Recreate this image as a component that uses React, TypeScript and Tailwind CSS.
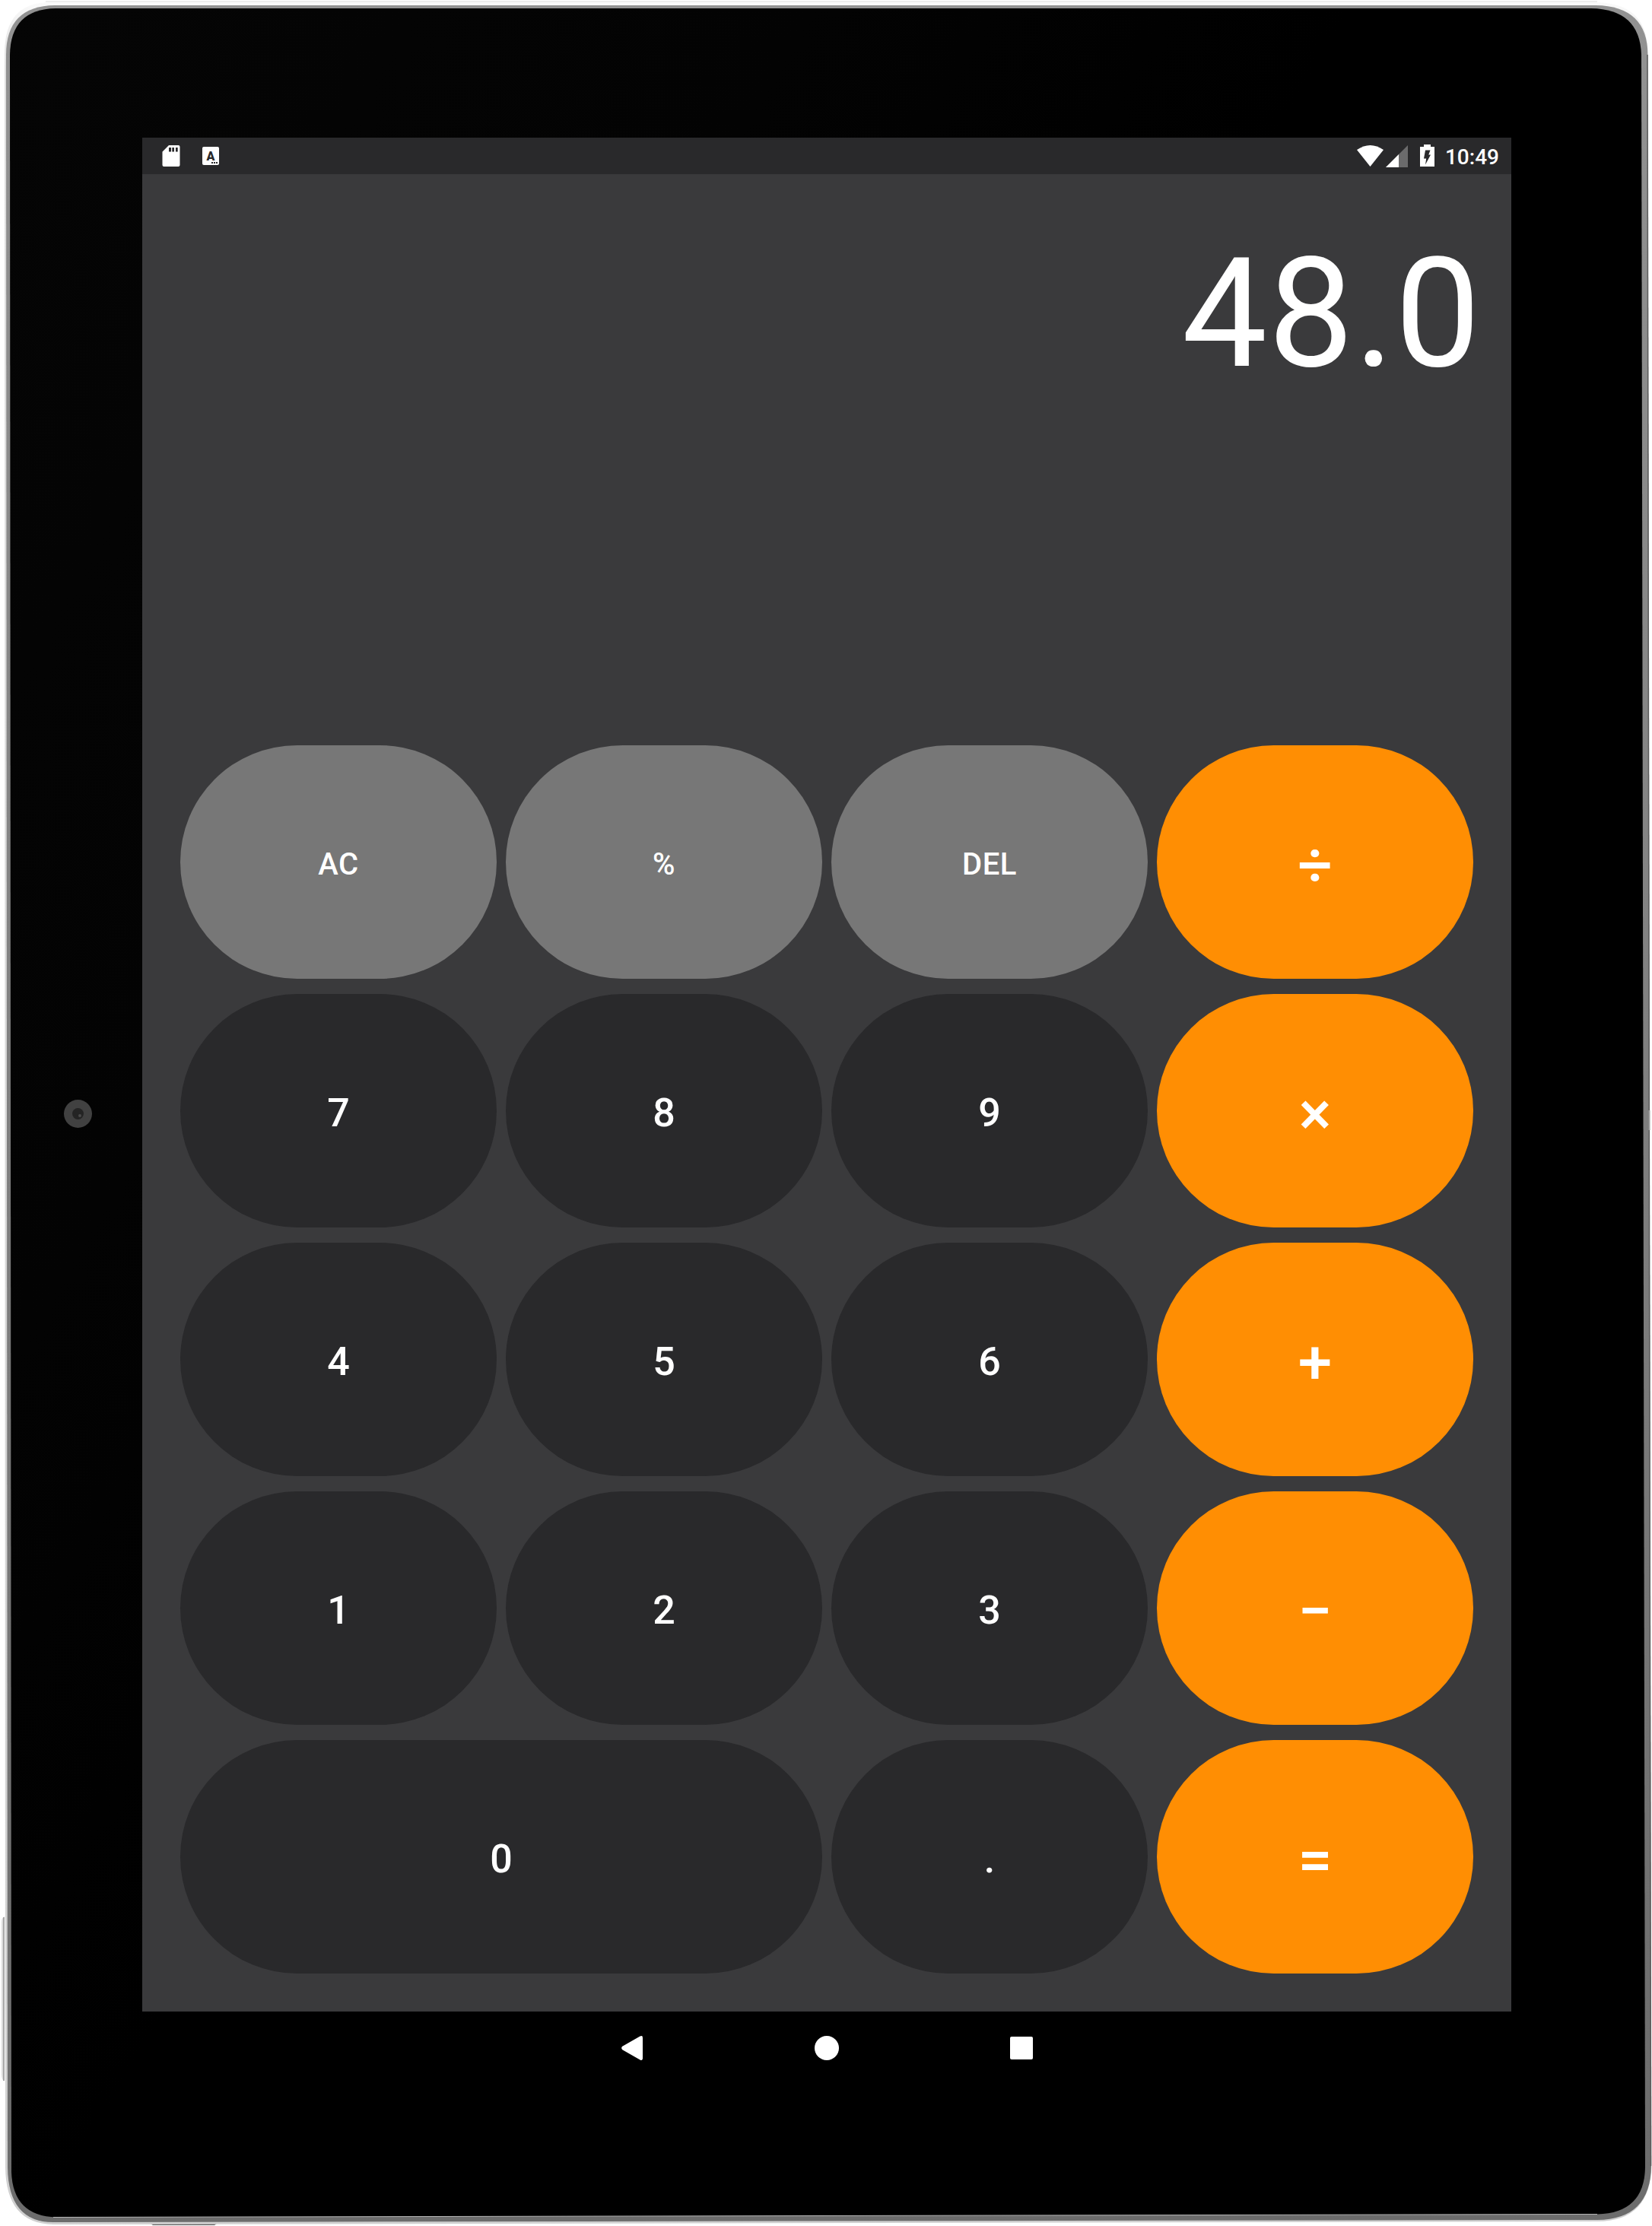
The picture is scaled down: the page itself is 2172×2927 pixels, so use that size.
import React from "react";

type Tone = "gray" | "dark" | "orange";
type Size = "sm" | "md" | "lg";

const tones: Record<Tone, string> = {
  gray: "bg-[#777777]",
  dark: "bg-[#29292b]",
  orange: "bg-[#ff8e03]",
};
const sizes: Record<Size, string> = {
  sm: "text-[40px] tracking-[0.5px] pt-[7px]",
  md: "text-[52px] pt-[7px]",
  lg: "text-[80px] pt-[9px]",
};

const keys: { label: string; tone: Tone; size: Size; wide?: boolean }[] = [
  { label: "AC", tone: "gray", size: "sm" },
  { label: "%", tone: "gray", size: "sm" },
  { label: "DEL", tone: "gray", size: "sm" },
  { label: "÷", tone: "orange", size: "lg" },
  { label: "7", tone: "dark", size: "md" },
  { label: "8", tone: "dark", size: "md" },
  { label: "9", tone: "dark", size: "md" },
  { label: "×", tone: "orange", size: "lg" },
  { label: "4", tone: "dark", size: "md" },
  { label: "5", tone: "dark", size: "md" },
  { label: "6", tone: "dark", size: "md" },
  { label: "+", tone: "orange", size: "lg" },
  { label: "1", tone: "dark", size: "md" },
  { label: "2", tone: "dark", size: "md" },
  { label: "3", tone: "dark", size: "md" },
  { label: "−", tone: "orange", size: "lg" },
  { label: "0", tone: "dark", size: "md", wide: true },
  { label: ".", tone: "dark", size: "md" },
  { label: "=", tone: "orange", size: "lg" },
];

/* Metal rim, side buttons and black glass of the tablet. */
function Bezel() {
  return (
    <svg className="absolute inset-0" width="2172" height="2927" viewBox="0 0 2172 2927" fill="none">
      <defs>
        <linearGradient id="rim" x1="0" y1="0" x2="0" y2="1">
          <stop offset="0" stopColor="#929292" />
          <stop offset="1" stopColor="#6c6c6c" />
        </linearGradient>
        <linearGradient id="edge" x1="0" y1="0" x2="0" y2="1">
          <stop offset="0" stopColor="#fafafa" />
          <stop offset="0.03" stopColor="#dedede" />
          <stop offset="1" stopColor="#d0d0d0" />
        </linearGradient>
        <linearGradient id="glass" x1="0" y1="0" x2="0.5" y2="0.4">
          <stop offset="0" stopColor="#050505" />
          <stop offset="0.6" stopColor="#030303" />
          <stop offset="1" stopColor="#000" />
        </linearGradient>
      </defs>
      <path d="M6 2520Q2 2521 2 2528V2728Q2 2735 6 2736Z" fill="#dcdcdc" />
      <path d="M4 2521H6V2736H4Z" fill="#a8a8a8" />
      <path d="M198 2924H285L282 2926H201Z" fill="#5e5e5e" />
      <path d="M60 2H2100" stroke="#dcdcdc" strokeWidth="1" />
      <path d="M66 3H2096Q2165 3 2166 66L2171.500 2845Q2171 2921 2100 2921L70 2925Q8 2924 7 2850L6 70Q6 3 66 3Z" fill="url(#edge)" />
      <path d="M72 7H2098Q2166 8 2166.500 72L2171 2848Q2170 2918.500 2100 2919L70 2922Q11 2922 10 2850L8 72Q8 8 72 7Z" fill="url(#rim)" />
      <path d="M2166 72L2170.500 2848" stroke="#5c5c5c" strokeWidth="1.500" />
      <path d="M2168.500 1460V1486" stroke="#a0a0a0" strokeWidth="2" />
      <path d="M73 11H2092Q2156 12 2158 72L2163 2850Q2162 2910 2100 2911.500L74 2915.500Q17 2914 15 2856L13 72Q14 12 73 11Z" fill="url(#glass)" />
      <path d="M70 2915.500L2100 2911.500" stroke="#b8b8b8" strokeWidth="1" />
    </svg>
  );
}

function StatusBar() {
  return (
    <header className="flex h-12 items-center justify-between bg-[#29292b]">
      <div className="flex items-center pl-[26px]">
        <svg width="24" height="28" viewBox="0 0 24 28">
          <path
            fillRule="evenodd"
            fill="#fff"
            d="M9 0H21.500Q23.500 0 23.500 2V26Q23.500 28 21.500 28H2.500Q.5 28 .5 26V8.500ZM9 3V8.500H12V3ZM13.300 3V8.500H16V3ZM18 3V8.500H20.700V3Z"
          />
        </svg>
        <svg className="ml-[29px]" width="22" height="24" viewBox="0 0 22 24">
          <rect width="22" height="24" rx="2" fill="#fff" />
          <text x="11" y="17.500" textAnchor="middle" fontSize="16" fontWeight="900" fill="#29292b">
            A
          </text>
          <path d="M12 20h2v2h-2zM15 20h2v2h-2zM18 20h2v2h-2z" fill="#29292b" />
        </svg>
      </div>
      <div className="flex items-center pr-4">
        <svg width="35" height="28" viewBox="0 0 35 28">
          <path d="M0 6Q17.500 -6 35 6L17.500 28Z" fill="#fff" />
        </svg>
        <svg className="ml-[3px] mt-px" width="29" height="29" viewBox="0 0 29 29">
          <path d="M29 0V29H0Z" fill="#6b6b6c" />
          <path d="M17 12V29H0Z" fill="#fff" />
        </svg>
        <svg className="-mt-px ml-4" width="19" height="29" viewBox="0 0 19 29">
          <path fill="#fff" d="M5 0H14V3H19V29H0V3H5Z" />
          <path fill="#29292b" d="M7 7.500H13.500L11.300 13.500H14L7 26.500L8.200 18.500H5Z" />
        </svg>
        <span className="ml-[14px] pt-1 text-[28px] font-medium leading-none">10:49</span>
      </div>
    </header>
  );
}

function NavBar() {
  return (
    <nav className="flex h-24 items-center justify-center">
      <div className="flex w-64 justify-center">
        <svg width="28" height="32" viewBox="0 0 28 32">
          <path d="M24.500 .6Q28 -1 28 2.500V29.500Q28 33 24.500 31.400L1.300 18.200Q-1 16 1.300 13.800Z" fill="#fff" />
        </svg>
      </div>
      <div className="flex w-64 justify-center">
        <div className="h-8 w-8 rounded-full bg-white" />
      </div>
      <div className="flex w-64 justify-center">
        <div className="size-[30px] rounded-[2px] bg-white" />
      </div>
    </nav>
  );
}

export default function App() {
  return (
    <div className="relative h-[2927px] w-[2172px] overflow-hidden bg-white font-[Roboto,sans-serif] text-white">
      <Bezel />
      <div className="absolute left-[84px] top-[1446px] flex size-[37px] items-center justify-center rounded-full bg-[#414141]">
        <div className="flex size-[15px] items-center justify-center rounded-full bg-[#242424]">
          <div className="ml-1 mt-1 size-1 rounded-full bg-[#4a4a4a]" />
        </div>
      </div>
      <main className="relative ml-[187px] flex w-[1800px] flex-col pt-[181px]">
        <StatusBar />
        <section className="flex h-[2416px] flex-col bg-[#3a3a3c] px-[50px] pb-[50px]">
          <div className="h-[751px] pt-[67px] text-right text-[200px] leading-[234px] tracking-[0.9px]">
            <span className="-mr-[10.4px]">48.0</span>
          </div>
          <div className="grid grid-cols-4 gap-x-3 gap-y-5">
            {keys.map((k) => (
              <button
                key={k.label}
                className={`flex h-[307px] items-center justify-center rounded-full font-medium leading-none ${tones[k.tone]} ${sizes[k.size]} ${k.wide ? "col-span-2" : ""}`}
              >
                {k.label}
              </button>
            ))}
          </div>
        </section>
        <NavBar />
      </main>
    </div>
  );
}
